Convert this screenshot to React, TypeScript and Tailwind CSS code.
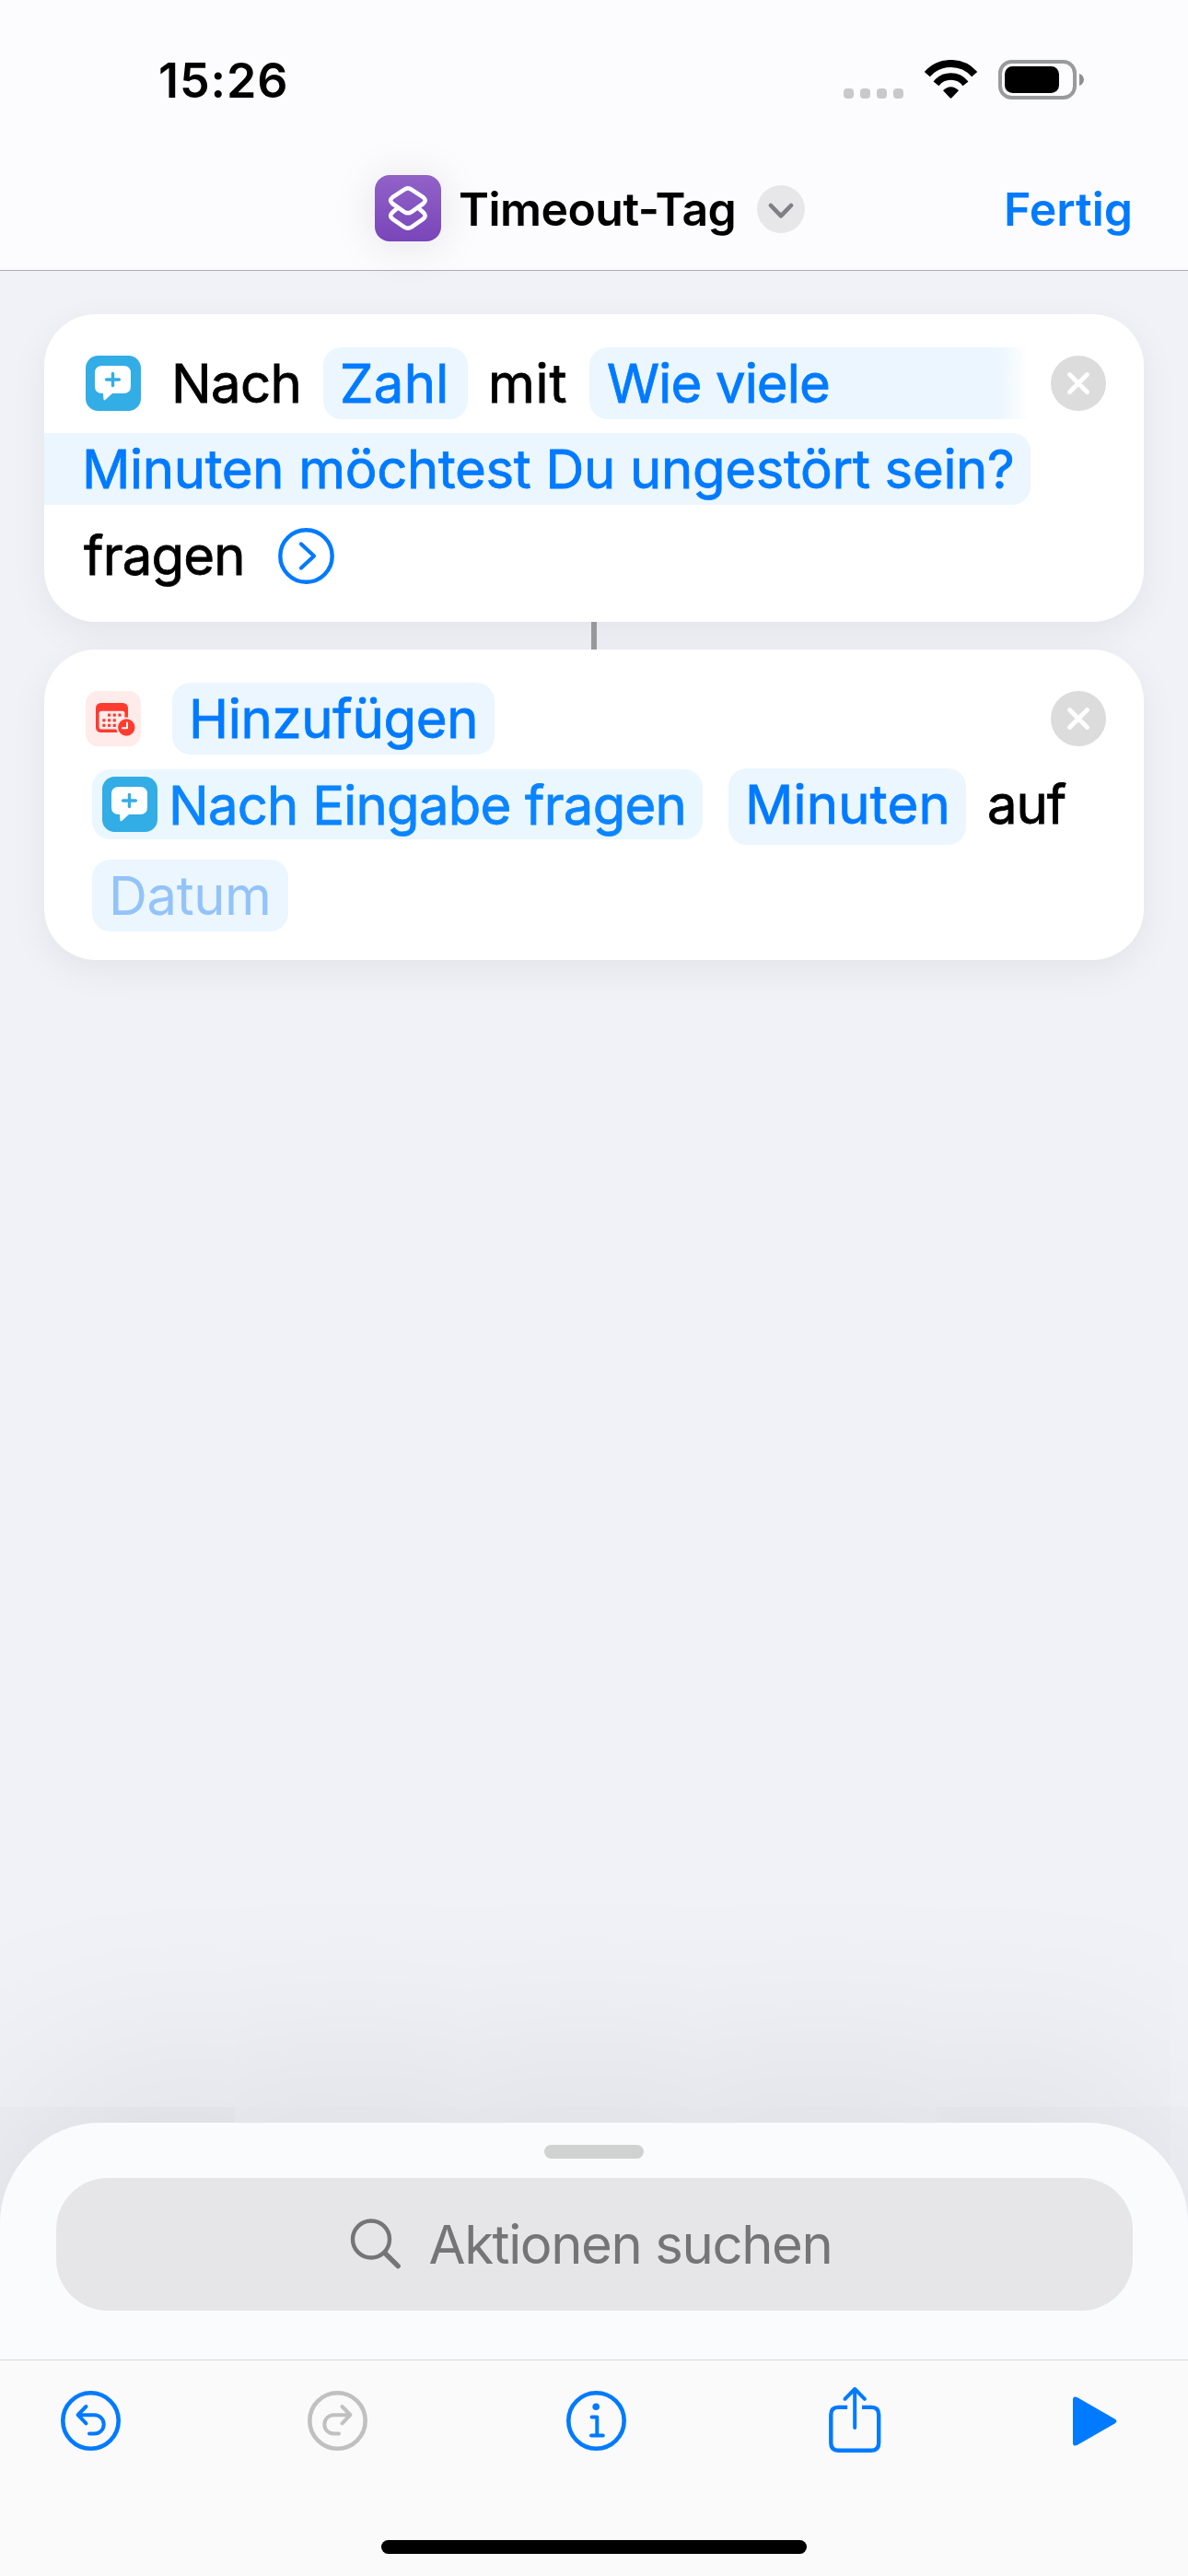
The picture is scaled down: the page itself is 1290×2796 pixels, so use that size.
import React from "react";

function StatusBar() {
  return (
    <div className="flex h-[170px] items-start pt-[65px] pl-[172px]">
      <span className="mt-[-8px] h-[62px] w-[160px] text-[52px] leading-[62px] font-semibold tracking-[0.9px] whitespace-nowrap">
        15:26
      </span>
      <div className="mt-[31px] ml-[584px] flex gap-[7px]">
        {[0, 1, 2, 3].map((i) => (
          <span key={i} className="h-[11px] w-[11px] rounded-[4px] bg-[#c9c9cb]" />
        ))}
      </div>
      <svg className="ml-[23px] h-[42px] w-[57px] shrink-0" viewBox="0 0 57 42" fill="none">
        <path d="M2.8 15.6A34.2 34.2 0 0 1 54.2 15.6" stroke="#000" strokeWidth="8" />
        <path d="M12.5 25.8A20.3 20.3 0 0 1 44.5 25.8" stroke="#000" strokeWidth="7.6" />
        <path d="M20 33.2Q28.5 25.4 37 33.2L29.4 41.3Q28.5 42.2 27.6 41.3Z" fill="#000" />
      </svg>
      <svg className="ml-[23px] h-[43px] w-[94px] shrink-0" viewBox="0 0 94 43" fill="none">
        <rect x="2" y="2" width="81" height="39" rx="12.5" stroke="#999a9c" strokeWidth="4" />
        <rect x="7" y="7" width="59" height="29" rx="8.5" fill="#000" />
        <path d="M88 15C94.6 17.2 94.6 25.8 88 28Z" fill="#8f8f91" />
      </svg>
    </div>
  );
}

function ShortcutGlyph() {
  return (
    <div className="h-[72px] w-[72px] shrink-0 rounded-[16px] bg-linear-to-b from-[#9162c8] to-[#7a45b9] shadow-[0_4px_50px_rgba(0,0,0,0.1)]">
      <svg className="h-[72px] w-[72px]" viewBox="0 0 72 72" fill="none" stroke="#fff" strokeWidth="4.6" strokeLinejoin="round">
        <path d="M31.8 15.8Q35.9 13 40 15.8L52.6 24.2Q56.8 27.5 52.6 31L40 39.8Q35.9 42.6 31.8 39.8L19.2 31Q15 27.5 19.2 24.2Z" />
        <path d="M25 35.6L19.2 40.4Q15 44 19.2 47.6L31.8 56.3Q35.9 59 40 56.3L52.6 47.6Q56.8 44 52.6 40.4L46.8 35.6" />
      </svg>
    </div>
  );
}

function NavBar() {
  return (
    <div className="flex h-[123px] items-start pt-[20px] pl-[407px]">
      <ShortcutGlyph />
      <span className="mt-[7px] ml-[19px] h-[60px] w-[304px] text-[50px] leading-[60px] font-semibold tracking-[-0.55px] whitespace-nowrap">
        Timeout-Tag
      </span>
      <div className="mt-[11px] ml-[20px] flex h-[52px] w-[52px] shrink-0 items-center justify-center rounded-full bg-[#e7e7e9]">
        <svg className="mt-[4px] h-[18px] w-[28px]" viewBox="0 0 28 18" fill="none">
          <path d="M3 3L14 14.4L25 3" stroke="#808084" strokeWidth="4.6" strokeLinecap="round" strokeLinejoin="round" />
        </svg>
      </div>
      <span className="mt-[7px] ml-[216px] h-[60px] text-[50px] leading-[60px] font-semibold whitespace-nowrap text-[#007aff]">
        Fertig
      </span>
    </div>
  );
}

function AskIcon() {
  return (
    <svg className="h-[60px] w-[60px] shrink-0" viewBox="0 0 60 60">
      <rect width="60" height="60" rx="13.5" fill="#32ade6" />
      <path
        d="M18 11H41Q49 11 49 19V33Q49 41 41 41H29L21.6 47.8Q19.6 49.4 19.4 46.8L19 41H18Q10 41 10 33V19Q10 11 18 11Z"
        fill="#fff"
      />
      <path d="M29.5 19.4V32.6M22.6 26H36.4" stroke="#32ade6" strokeWidth="3.4" strokeLinecap="round" />
    </svg>
  );
}

const calendarDots = [
  [24, 24.6], [29.7, 24.6], [35.4, 24.6],
  [18.3, 30.2], [24, 30.2], [29.7, 30.2],
  [18.3, 35.8], [24, 35.8], [29.7, 35.8],
];

function CalendarIcon() {
  return (
    <svg className="h-[60px] w-[60px] shrink-0" viewBox="0 0 60 60">
      <rect width="60" height="60" rx="13.5" fill="#ffebea" />
      <rect x="11" y="13" width="35" height="32" rx="5.5" fill="#ff3b30" />
      <rect x="14.6" y="21.8" width="27.8" height="19.6" rx="2.5" fill="#ffebea" />
      {calendarDots.map(([x, y]) => (
        <rect key={x + "-" + y} x={x} y={y} width="3.2" height="3.2" rx="0.8" fill="#ff3b30" />
      ))}
      <circle cx="44.3" cy="39.5" r="11" fill="#ffebea" />
      <circle cx="44.3" cy="39.5" r="9.2" fill="#ff3b30" />
      <path d="M45 34.5V40.3H40" stroke="#fff" strokeWidth="1.9" fill="none" strokeLinecap="round" strokeLinejoin="round" />
    </svg>
  );
}

function CloseButton({ className = "" }: { className?: string }) {
  return (
    <svg className={"h-[60px] w-[60px] shrink-0 " + className} viewBox="0 0 60 60">
      <circle cx="30" cy="30" r="30" fill="#dcdcdc" />
      <path d="M20.5 20.5L39.5 39.5M39.5 20.5L20.5 39.5" stroke="#fff" strokeWidth="4.8" strokeLinecap="round" />
    </svg>
  );
}

const cardClass =
  "mx-[48px] rounded-[56px] bg-white pl-[45px] shadow-[0_12px_40px_rgba(0,0,0,0.06)] text-[58px] leading-[78px] whitespace-nowrap [-webkit-text-stroke:0.8px_currentColor]";

function AskCard() {
  return (
    <div className={cardClass + " h-[334px] pt-[36px]"}>
      <div className="flex h-[78px] items-center">
        <AskIcon />
        <span className="ml-[33px] w-[142px] shrink-0 tracking-[-0.6px]">Nach</span>
        <span className="ml-[23px] h-[78px] w-[157px] shrink-0 rounded-[20px] bg-[#ebf6ff] pl-[18px] tracking-[0.3px] text-[#007aff]">
          Zahl
        </span>
        <span className="ml-[22px] w-[87px] shrink-0 tracking-[0.8px]">mit</span>
        <span className="ml-[23px] h-[78px] w-[477px] shrink-0 rounded-l-[20px] bg-linear-to-r from-[#ebf6ff] from-93% to-white pl-[19px] tracking-[-0.85px] text-[#007aff]">
          Wie viele
        </span>
        <CloseButton className="ml-[24px]" />
      </div>
      <div className="mt-[15px] ml-[-45px] h-[78px] w-[1071px] rounded-r-[20px] bg-[#ebf6ff] pl-[41px] tracking-[-0.32px] text-[#007aff]">
        Minuten möchtest Du ungestört sein?
      </div>
      <div className="mt-[16px] ml-[-2px] flex h-[78px] items-center">
        <span className="w-[180px] shrink-0 tracking-[-0.8px]">fragen</span>
        <svg className="ml-[31px] h-[61px] w-[61px]" viewBox="0 0 61 61" fill="none" stroke="#007aff" strokeLinecap="round" strokeLinejoin="round">
          <circle cx="30.5" cy="30.5" r="28.2" strokeWidth="4.4" />
          <path d="M25 17.5L39 30.5L25 43.5" strokeWidth="4.2" />
        </svg>
      </div>
    </div>
  );
}

function AddCard() {
  return (
    <div className={cardClass + " h-[337px] pt-[36px]"}>
      <div className="flex h-[78px] items-center">
        <CalendarIcon />
        <span className="ml-[34px] h-[78px] w-[350px] shrink-0 rounded-[20px] bg-[#ebf6ff] pl-[18px] tracking-[-0.3px] text-[#007aff]">
          Hinzufügen
        </span>
        <CloseButton className="ml-[604px]" />
      </div>
      <div className="mt-[15px] ml-[7px] flex h-[83px] items-start">
        <span className="mt-px flex h-[76px] w-[663px] shrink-0 items-center rounded-[20px] bg-[#ebf7ff] pl-[11px] tracking-[-0.76px] text-[#0a84ff]">
          <AskIcon />
          <span className="mt-[2px] ml-[12px]">Nach Eingabe fragen</span>
        </span>
        <span className="ml-[28px] h-[83px] w-[258px] shrink-0 rounded-[20px] bg-[#ebf6ff] pl-[18px] tracking-[0.2px] text-[#007aff]">
          Minuten
        </span>
        <span className="ml-[23px] tracking-[-1px]">auf</span>
      </div>
      <div className="mt-[16px] ml-[7px] h-[78px] w-[213px] rounded-[20px] bg-[#ebf6ff] pl-[18px] tracking-[-0.4px] text-[#93c3f9] [-webkit-text-stroke:0]">
        Datum
      </div>
    </div>
  );
}

function SearchSheet() {
  return (
    <div className="flex h-[257px] flex-col items-center rounded-t-[110px] bg-[#fafbfc] pt-[24px]">
      <div className="h-[15px] w-[108px] rounded-full bg-[#d0d1d1]" />
      <div className="mt-[21px] flex h-[144px] w-[1169px] items-start rounded-[56px] bg-[#e6e6e8] pl-[319px]">
        <svg className="mt-[44px] h-[56px] w-[56px] shrink-0" viewBox="0 0 56 56" fill="none" stroke="#757577" strokeLinecap="round">
          <circle cx="23" cy="22.5" r="20" strokeWidth="4.4" />
          <path d="M38 37.5L52.2 51.6" strokeWidth="5.4" />
        </svg>
        <span className="mt-[33px] ml-[30px] h-[78px] text-[58px] leading-[78px] tracking-[-1.39px] whitespace-nowrap text-[#757577]">
          Aktionen suchen
        </span>
      </div>
    </div>
  );
}

function ArrowCircle({ color, flipped }: { color: string; flipped?: boolean }) {
  return (
    <svg
      className={"mt-[33px] h-[65px] w-[65px] shrink-0 " + (flipped ? "-scale-x-100" : "")}
      viewBox="0 0 65 65"
      fill="none"
      stroke={color}
      strokeWidth="4"
      strokeLinecap="round"
      strokeLinejoin="round"
    >
      <circle cx="32.5" cy="32.5" r="30.2" strokeWidth="4.6" />
      <path d="M27.5 17L18.6 26.2L27.5 35.4M19 26.2H36.5A10.2 10.2 0 0 1 36.5 46.6H31" />
    </svg>
  );
}

function Toolbar() {
  return (
    <div className="h-[235px] border-t border-[#dadadc] bg-[#fafafa]">
      <div className="flex h-[195px] items-start pl-[66px]">
        <ArrowCircle color="#007aff" />
        <div className="w-[203px]" />
        <ArrowCircle color="#c0c0c1" flipped />
        <svg className="mt-[33px] ml-[216px] h-[65px] w-[65px] shrink-0" viewBox="0 0 65 65" fill="none" stroke="#007aff" strokeLinecap="round" strokeLinejoin="round">
          <circle cx="32.5" cy="32.5" r="30.2" strokeWidth="4.6" />
          <circle cx="32.2" cy="17.2" r="3.8" fill="#007aff" stroke="none" />
          <path d="M27.6 28.6H33.3V48.4M27 48.4H39.8" strokeWidth="4" />
        </svg>
        <svg className="mt-[28px] ml-[220px] h-[73px] w-[57px] shrink-0" viewBox="0 0 57 73" fill="none" stroke="#007aff" strokeWidth="4.4" strokeLinecap="round" strokeLinejoin="round">
          <path d="M20.2 22.9H10.3Q2.3 22.9 2.3 30.9V61.5Q2.3 69.7 10.3 69.7H46.2Q54.2 69.7 54.2 61.5V30.9Q54.2 22.9 46.2 22.9H36" strokeLinecap="butt" />
          <path d="M28.2 45V3M17.5 13.8L28.2 3L38.9 13.8" strokeWidth="4" />
        </svg>
        <svg className="mt-[39px] ml-[208px] h-[54px] w-[48px] shrink-0" viewBox="0 0 48 54">
          <path d="M0 3.8Q0 -1.2 5 1.2L45.5 24.4Q49.4 27 45.5 29.6L5 52.8Q0 55.2 0 50.2Z" fill="#007aff" />
        </svg>
      </div>
      <div className="mx-auto h-[15px] w-[462px] rounded-full bg-black" />
    </div>
  );
}

export default function App() {
  return (
    <div className="flex h-[2796px] w-[1290px] flex-col overflow-hidden bg-[#f1f2f7] font-[Inter,sans-serif] text-black">
      <header className="h-[294px] shrink-0 border-b border-[#adadb1] bg-[#fcfcfe]">
        <StatusBar />
        <NavBar />
      </header>
      <main className="flex-1 pt-[47px]">
        <AskCard />
        <div className="relative mx-auto h-[30px] w-[6px] bg-[#98989c]" />
        <AddCard />
      </main>
      <footer className="relative shrink-0 rounded-t-[110px] shadow-[0_0_340px_rgba(0,0,0,0.16)]">
        <SearchSheet />
        <Toolbar />
      </footer>
    </div>
  );
}
